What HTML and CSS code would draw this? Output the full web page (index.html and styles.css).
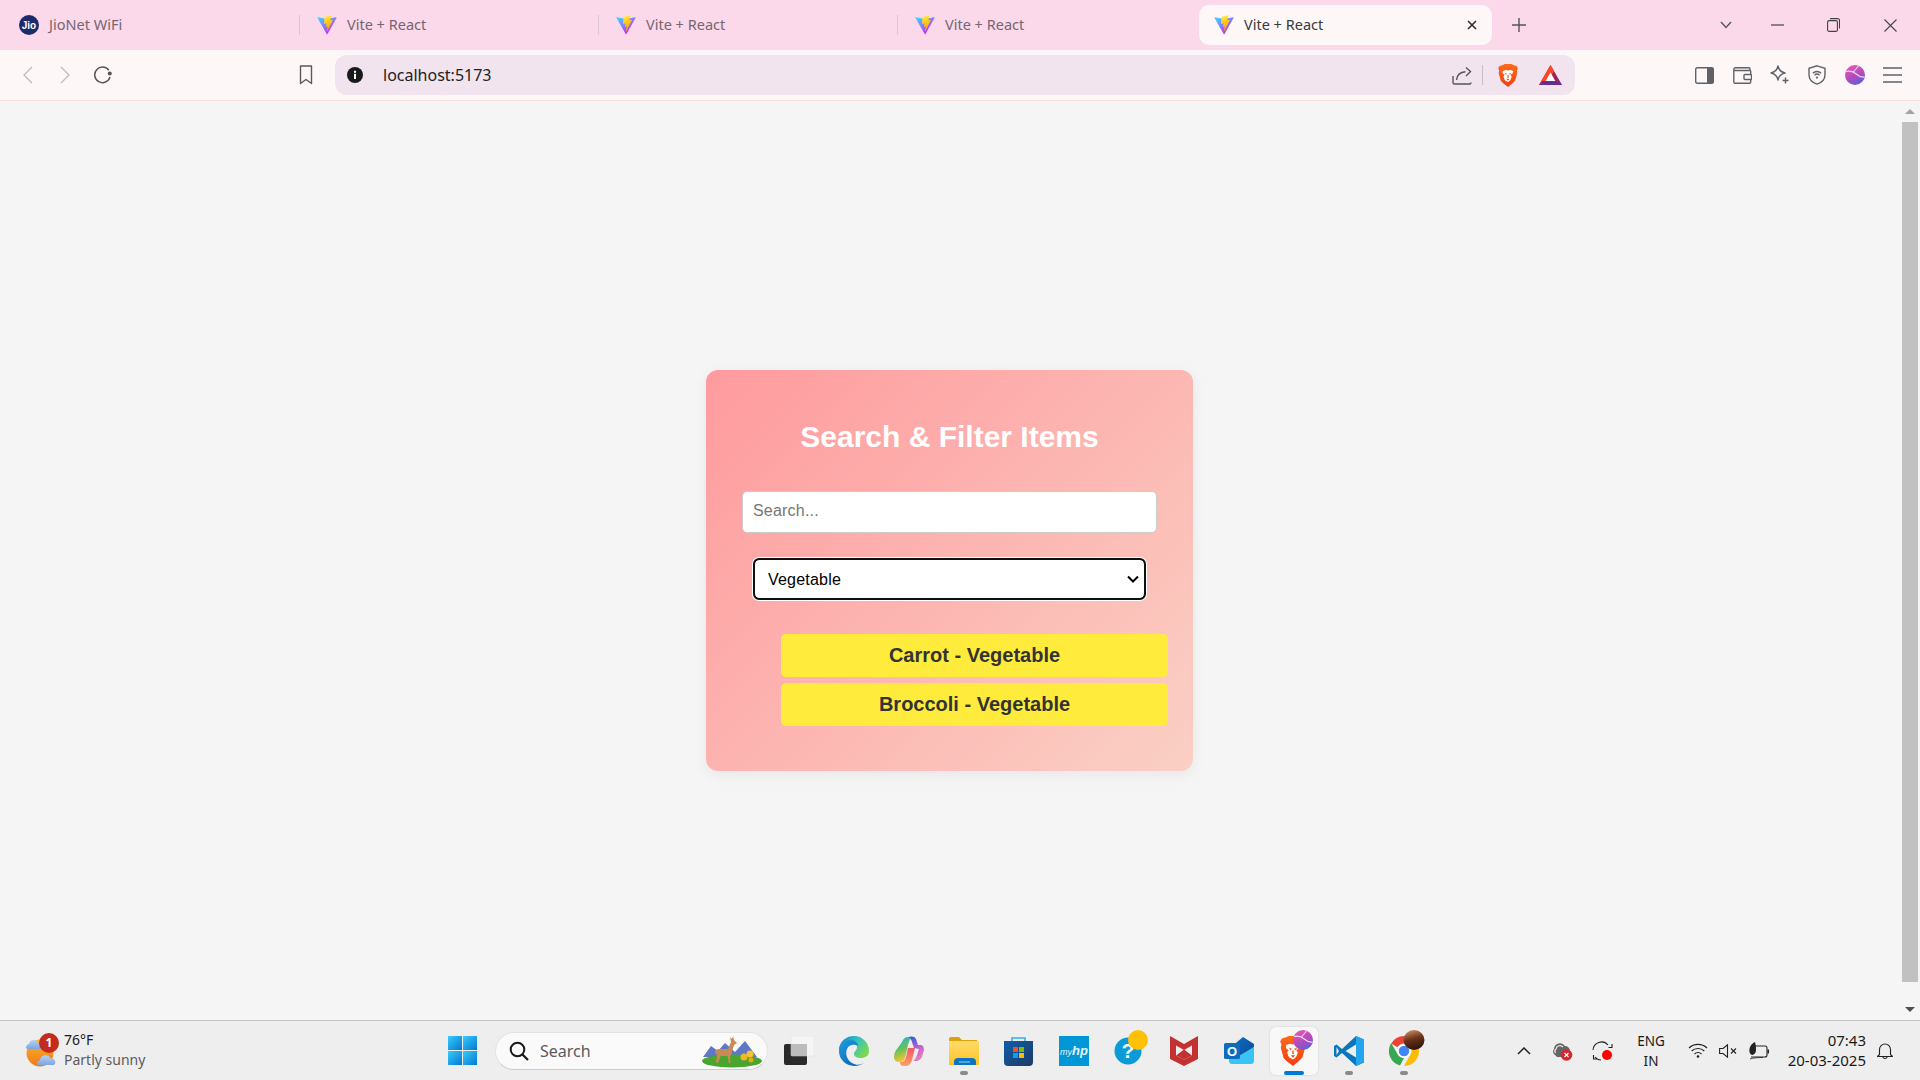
FILE: index.html
```html
<!DOCTYPE html>
<html lang="en">
<head>
<meta charset="utf-8">
<title>Vite + React</title>
<link rel="stylesheet" href="styles.css">
</head>
<body>
<svg class="defs" aria-hidden="true">
  <defs>
    <linearGradient id="vg1" x1="0" y1="0.1" x2="0.6" y2="0.9"><stop offset="0" stop-color="#41d1ff"/><stop offset="1" stop-color="#bd34fe"/></linearGradient>
    <linearGradient id="vg2" x1="0.4" y1="0" x2="0.6" y2="0.8"><stop offset="0" stop-color="#ffea83"/><stop offset="0.2" stop-color="#ffdd35"/><stop offset="1" stop-color="#ffa800"/></linearGradient>
    <linearGradient id="win" x1="0" y1="0" x2="1" y2="1"><stop offset="0" stop-color="#3ccbfa"/><stop offset="1" stop-color="#0078d4"/></linearGradient>
    <linearGradient id="edge1" x1="0" y1="0" x2="1" y2="0.6"><stop offset="0" stop-color="#0c7bc4"/><stop offset="0.5" stop-color="#2fc0c8"/><stop offset="1" stop-color="#7bd94e"/></linearGradient>
    <linearGradient id="edge2" x1="0" y1="0" x2="1" y2="1"><stop offset="0" stop-color="#1b9de2"/><stop offset="1" stop-color="#0c59a4"/></linearGradient>
    <linearGradient id="cop1" x1="0" y1="0" x2="0.3" y2="1"><stop offset="0" stop-color="#1cb0e8"/><stop offset="0.55" stop-color="#68c25a"/><stop offset="1" stop-color="#f5c631"/></linearGradient>
    <linearGradient id="cop2" x1="0.2" y1="0" x2="0.8" y2="1"><stop offset="0" stop-color="#2560d8"/><stop offset="0.45" stop-color="#b35bd6"/><stop offset="1" stop-color="#f08ab4"/></linearGradient>
    <linearGradient id="cop3" x1="0.5" y1="0" x2="0.5" y2="1"><stop offset="0" stop-color="#f5566a"/><stop offset="1" stop-color="#fba067"/></linearGradient>
    <linearGradient id="fold" x1="0" y1="0" x2="0" y2="1"><stop offset="0" stop-color="#ffdc6a"/><stop offset="1" stop-color="#fcc227"/></linearGradient>
    <linearGradient id="store" x1="0" y1="0" x2="1" y2="1"><stop offset="0" stop-color="#0f5ea8"/><stop offset="1" stop-color="#1e3a66"/></linearGradient>
    <linearGradient id="outl" x1="0" y1="0" x2="1" y2="1"><stop offset="0" stop-color="#0b6fc4"/><stop offset="1" stop-color="#0a4b98"/></linearGradient>
    <linearGradient id="ball" x1="0.2" y1="0" x2="0.7" y2="1"><stop offset="0" stop-color="#e35bb6"/><stop offset="0.55" stop-color="#b44bbd"/><stop offset="1" stop-color="#5a60d8"/></linearGradient>
    <linearGradient id="nut" x1="0.3" y1="0" x2="0.6" y2="1"><stop offset="0" stop-color="#c98a5f"/><stop offset="0.45" stop-color="#6a3318"/><stop offset="1" stop-color="#2a130a"/></linearGradient>
    <linearGradient id="sun" x1="0.5" y1="0" x2="0.5" y2="1"><stop offset="0" stop-color="#fbb626"/><stop offset="1" stop-color="#f0791a"/></linearGradient>
    <linearGradient id="cloud" x1="0.5" y1="0" x2="0.5" y2="1"><stop offset="0" stop-color="#b5d0f3"/><stop offset="1" stop-color="#7ea5df"/></linearGradient>
    <linearGradient id="brv" x1="0.5" y1="0" x2="0.5" y2="1"><stop offset="0" stop-color="#ff6a1a"/><stop offset="1" stop-color="#f23f14"/></linearGradient>

    <symbol id="vite" viewBox="0 0 410 404">
      <path fill="url(#vg1)" d="M399.641 59.5246L215.643 388.545C211.844 395.338 202.084 395.378 198.228 388.618L10.5817 59.5563C6.38087 52.1896 12.6802 43.2665 21.0281 44.7586L205.223 77.6824C206.398 77.8924 207.601 77.8904 208.776 77.6763L389.119 44.8058C397.439 43.2894 403.768 52.1434 399.641 59.5246Z"/>
      <path fill="url(#vg2)" d="M292.965 1.5744L156.801 28.2552C154.563 28.6937 152.906 30.5903 152.771 32.8664L144.395 174.33C144.198 177.662 147.258 180.248 150.51 179.498L188.42 170.749C191.967 169.931 195.172 173.055 194.443 176.622L183.18 231.775C182.422 235.487 185.907 238.661 189.532 237.56L212.947 230.446C216.577 229.344 220.065 232.527 219.297 236.242L201.398 322.875C200.278 328.294 207.486 331.249 210.492 326.603L212.5 323.5L323.454 102.072C325.312 98.3645 322.108 94.137 318.036 94.9228L279.014 102.454C275.347 103.161 272.227 99.746 273.262 96.1583L298.731 7.86689C299.767 4.27314 296.636 0.855181 292.965 1.5744Z"/>
    </symbol>

    <symbol id="lion" viewBox="0 0 24 28">
      <path fill="url(#brv)" d="M5 1.5 8 0h8l3 1.5 3 .5 2 3-1.2 3.2.6 2.3-2.6 9.5-3 3L12 28l-5.8-4.5-3-3L.6 11l.6-2.8L0 5l2-3z"/>
      <path fill="#fff" d="M5.5 8.5 9 7.2l3 .8 3-.8 3.5 1.3-1 3-2.5 1.7 1.5 2-1 3-1 1.8L12 22l-3.5-2-1-1.8-1-3 1.5-2-2.5-1.7z"/>
      <path fill="url(#brv)" d="M8 10.800 11 11.800 9.500 13.500zM16 10.800 13 11.800 14.500 13.500zM10 18h4l-2 2.300zM11.300 13.500h1.400v3.500h-1.400z"/>
    </symbol>

    <symbol id="ball-ic" viewBox="0 0 20 20">
      <circle cx="10" cy="10" r="10" fill="url(#ball)"/>
      <path d="M1 6.500c4-1 8 .5 11 3s5 3 7.500 2.500M13.500 1 8 7.500" fill="none" stroke="#f6d7ea" stroke-width="1.100"/>
    </symbol>
  </defs>
</svg>

<div class="screen">
  <header class="tabbar">
    <div class="tab">
      <svg class="fav" viewBox="0 0 20 20"><circle cx="10" cy="10" r="10" fill="#1f2a6b"/><text x="10" y="13.500" class="jio">Jio</text></svg>
      <span>JioNet WiFi</span>
    </div>
    <i class="tab-sep"></i>
    <div class="tab"><svg class="fav"><use href="#vite"/></svg><span>Vite + React</span></div>
    <i class="tab-sep"></i>
    <div class="tab"><svg class="fav"><use href="#vite"/></svg><span>Vite + React</span></div>
    <i class="tab-sep"></i>
    <div class="tab"><svg class="fav"><use href="#vite"/></svg><span>Vite + React</span></div>
    <div class="tab tab-active">
      <svg class="fav"><use href="#vite"/></svg><span>Vite + React</span>
      <svg class="tab-close" viewBox="0 0 10 10"><path d="M1 1l8 8M9 1 1 9" stroke="#333" stroke-width="1.700" fill="none"/></svg>
    </div>
    <svg class="new-tab" viewBox="0 0 14 14"><path d="M7 0v14M0 7h14" stroke="#555" stroke-width="1.400"/></svg>
    <svg class="tab-list" viewBox="0 0 12 8"><path d="M1 1l5 5.500L11 1" stroke="#5a5a5a" stroke-width="1.500" fill="none"/></svg>
    <div class="win-btn"><svg width="13" height="2" viewBox="0 0 13 2"><path d="M0 1h13" stroke="#444" stroke-width="1.200"/></svg></div>
    <div class="win-btn"><svg width="13" height="14" viewBox="0 0 13 14"><rect x=".6" y="2.600" width="9.800" height="10.800" rx="1.500" fill="none" stroke="#444" stroke-width="1.100"/><path d="M3 .6h7.500a2 2 0 0 1 2 2v8" fill="none" stroke="#444" stroke-width="1.100"/></svg></div>
    <div class="win-btn win-close"><svg width="13" height="13" viewBox="0 0 13 13"><path d="M.5.5l12 12M12.500.5l-12 12" stroke="#444" stroke-width="1.100"/></svg></div>
  </header>

  <nav class="toolbar">
    <div class="tool"><svg width="10" height="18" viewBox="0 0 10 18"><path d="M9 1 1 9l8 8" fill="none" stroke="#c2bdbf" stroke-width="1.400"/></svg></div>
    <div class="tool"><svg width="10" height="18" viewBox="0 0 10 18"><path d="M1 1l8 8-8 8" fill="none" stroke="#c2bdbf" stroke-width="1.400"/></svg></div>
    <div class="tool"><svg width="20" height="18" viewBox="0 0 20 18"><path d="M15.800 4.200A7.800 7.800 0 1 0 17 11" fill="none" stroke="#555" stroke-width="1.500"/><circle cx="16.800" cy="7.500" r="2" fill="#555"/></svg></div>
    <div class="tool tool-mark"><svg width="14" height="20" viewBox="0 0 14 20"><path d="M1.500 1h11v17.500L7 14.500l-5.500 4z" fill="none" stroke="#5a5a5a" stroke-width="1.400" stroke-linejoin="round"/></svg></div>
    <div class="address">
      <svg class="info" viewBox="0 0 16 16"><circle cx="8" cy="8" r="8" fill="#1a1a1a"/><rect x="7" y="6.800" width="2" height="5.200" fill="#fff"/><rect x="7" y="3.800" width="2" height="2" fill="#fff"/></svg>
      <span class="url">localhost:5173</span>
      <svg class="share" viewBox="0 0 20 19"><path d="M1 10v6.500a1.500 1.500 0 0 0 1.500 1.500h15a1.500 1.500 0 0 0 1.500-1.500M4.500 14c.5-5 4-8 9-8.300M14 1.500l4.500 4-4.500 4.500" fill="none" stroke="#555" stroke-width="1.400"/></svg>
      <i class="addr-sep"></i>
      <svg class="brave-addr"><use href="#lion"/></svg>
      <svg class="bat" viewBox="0 0 23 20"><path d="M11.500 0 23 20H0z" fill="#9e1f63"/><path d="M0 20 11.500 0 15 6 7 20z" fill="#ff4724"/><path d="M0 20l3.500-4h16l3.500 4z" fill="#662d91"/><path d="M11.500 7.500 16.300 16H6.700z" fill="#fff"/></svg>
    </div>
    <div class="tool tool-first"><svg width="19" height="17" viewBox="0 0 19 17"><rect x=".7" y=".7" width="17.600" height="15.600" rx="1.500" fill="none" stroke="#5f6368" stroke-width="1.400"/><rect x="12" y="1" width="6.500" height="15" fill="#5f6368"/></svg></div>
    <div class="tool"><svg width="19" height="17" viewBox="0 0 19 17"><path d="M17 3.500V2a1.200 1.200 0 0 0-1.200-1.200H2.500A1.700 1.700 0 0 0 .8 2.500v12.500a1.200 1.200 0 0 0 1.200 1.200h14.500a1.200 1.200 0 0 0 1.200-1.200V4.500a1 1 0 0 0-1-1H1.500" fill="none" stroke="#5f6368" stroke-width="1.400"/><rect x="11" y="7.500" width="7.500" height="5" rx="1" fill="#fef7f8" stroke="#5f6368" stroke-width="1.400"/></svg></div>
    <div class="tool"><svg width="20" height="20" viewBox="0 0 20 20"><path d="M8 1c.8 4 2.500 6 7 7-4.500 1-6.200 3-7 7-.8-4-2.500-6-7-7 4.500-1 6.200-3 7-7z" fill="none" stroke="#5f6368" stroke-width="1.400" stroke-linejoin="round"/><path d="M15.500 12.500v6M12.500 15.500h6" stroke="#5f6368" stroke-width="1.500"/></svg></div>
    <div class="tool"><svg width="18" height="20" viewBox="0 0 18 20"><path d="M9 .8l8 2.500v6.500c0 4.500-3.500 8-8 9.400-4.500-1.400-8-4.900-8-9.400V3.300z" fill="none" stroke="#5f6368" stroke-width="1.400"/><path d="M4.800 8.200a6 6 0 0 1 8.400 0M6.500 10.200a3.600 3.600 0 0 1 5 0" fill="none" stroke="#5f6368" stroke-width="1.300"/><circle cx="9" cy="12.600" r="1.100" fill="#5f6368"/></svg></div>
    <div class="tool"><svg width="20" height="20"><use href="#ball-ic"/></svg></div>
    <div class="tool"><svg width="19" height="16" viewBox="0 0 19 16"><path d="M0 1h19M0 8h19M0 15h19" stroke="#5f6368" stroke-width="1.500"/></svg></div>
  </nav>

  <div class="viewport">
    <main class="page">
      <section class="card">
        <h1 class="title">Search &amp; Filter Items</h1>
        <input class="search" type="text" placeholder="Search...">
        <select class="filter">
          <option>All</option>
          <option>Fruit</option>
          <option selected>Vegetable</option>
        </select>
        <ul class="results">
          <li class="result">Carrot - Vegetable</li>
          <li class="result">Broccoli - Vegetable</li>
        </ul>
      </section>
    </main>
    <aside class="scrollbar">
      <i class="arrow-up"></i>
      <div class="thumb"></div>
      <i class="arrow-down"></i>
    </aside>
  </div>

  <footer class="taskbar">
    <div class="weather">
      <div class="weather-icon">
        <svg width="34" height="34" viewBox="0 0 34 34">
          <circle cx="15" cy="19" r="13.500" fill="url(#sun)"/>
          <path d="M1 14a4 4 0 0 1 3-4 5 5 0 0 1 9.500-1A3.500 3.500 0 0 1 16 15H2.500z" fill="url(#cloud)"/>
          <path d="M12 31a4 4 0 0 1 3-5 5.500 5.500 0 0 1 10.500-1.500A3.800 3.800 0 0 1 29 31z" fill="url(#cloud)"/>
        </svg>
        <span class="badge">1</span>
      </div>
      <div class="weather-text">
        <span class="temp">76°F</span>
        <span class="cond">Partly sunny</span>
      </div>
    </div>
    <svg class="start" viewBox="0 0 29 29"><rect width="14" height="14" fill="url(#win)"/><rect x="15" width="14" height="14" fill="url(#win)"/><rect y="15" width="14" height="14" fill="url(#win)"/><rect x="15" y="15" width="14" height="14" fill="url(#win)"/></svg>
    <div class="task-search">
      <svg class="mag" viewBox="0 0 20 20"><circle cx="8.500" cy="8.500" r="6.800" fill="none" stroke="#1a1a1a" stroke-width="2"/><path d="M13.500 13.500 19 19" stroke="#1a1a1a" stroke-width="2.200"/></svg>
      <span>Search</span>
      <svg class="deer" viewBox="0 0 64 36">
        <path d="M2 24 10 13l7 5 7-8 10 9 10-11 12 16z" fill="#5d78c4"/>
        <ellipse cx="31" cy="28" rx="30" ry="6.500" fill="#4aa52e"/>
        <path d="M14 19c0-2 2-3 4-3h9l3-7-1-5 2 2 1-3 1 4 3 3-3 2-2 7c-.5 2-1 3-2 4l.5 7h-1.500l-1.500-7h-7l-2.500 7H15l1-8c-1-1-2-1.500-2-3z" fill="#c98a55"/>
        <circle cx="43" cy="24" r="3.500" fill="#f2b61f"/><circle cx="49" cy="21" r="3.500" fill="#f5c330"/><circle cx="50" cy="27" r="2.500" fill="#eda71a"/>
      </svg>
    </div>
    <div class="apps">
      <div class="app"><svg width="30" height="29" viewBox="0 0 30 29"><rect y="8" width="23" height="21" rx="2" fill="#2a2a2a"/><rect x="7" width="23" height="20" rx="1.500" fill="#f5f5f5" stroke="#ddd" stroke-width=".5"/><rect x="7" y="8" width="16" height="12" fill="#bcbcbc"/></svg></div>
      <div class="app"><svg width="30" height="30" viewBox="0 0 30 30"><path d="M15 0a15 15 0 0 1 15 15c0 5-4 7-8 7-5 0-7-2-7-4 0-3 3-3 3-7S14 5 10 7 3 13 3 18c-1-2-3-4-3-6A15 15 0 0 1 15 0z" fill="url(#edge1)"/><path d="M0 15C0 8 6 4 11 4c5 0 8 3 8 6-3-2-9-2-11 3s0 11 5 14 10 2 14-2c-3 3-7 5-12 5A15 15 0 0 1 0 15z" fill="url(#edge2)"/></svg></div>
      <div class="app"><svg width="30" height="30" viewBox="0 0 30 30"><path d="M8 6c1-3 3-5 6-5h5c-3 1-4 4-5 8l-3 13c-1 3-3 4-6 4-3 0-5-2-5-5 0-2 .5-4 1.500-6z" fill="url(#cop1)"/><path d="M14 1c3-1 7-1 8 2l2 6h2c3 0 4 2 4 5l-2 7c-1 2-3 4-6 4h-3c2-1 3-3 4-6l2-6-5-1-2-6c-1-3-2-5-4-5z" fill="url(#cop2)"/><path d="M14 12h7l-3 12c-1 3-3 6-6 6H9c-2 0-3-2-3-4h1c3 0 4-2 5-5z" fill="url(#cop3)"/></svg></div>
      <div class="app"><svg width="30" height="28" viewBox="0 0 30 28"><path d="M0 2a2 2 0 0 1 2-2h8l3 3h15v5H0z" fill="#dfa00a"/><path d="M0 4h30v24H0z" fill="url(#fold)"/><path d="M5 28v-3a4 4 0 0 1 4-4h14a4 4 0 0 1 4 4v3z" fill="#0d74c4"/><path d="M10 25h11" stroke="#7cc3f0" stroke-width="1.200"/></svg><i class="pip"></i></div>
      <div class="app"><svg width="29" height="30" viewBox="0 0 29 30"><path d="M8 6V2h13v4" fill="none" stroke="#2bb3f0" stroke-width="1.600"/><path d="M0 5h29v21a4 4 0 0 1-4 4H4a4 4 0 0 1-4-4z" fill="url(#store)"/><rect x="9" y="11" width="5" height="5" fill="#f25022"/><rect x="15" y="11" width="5" height="5" fill="#7fba00"/><rect x="9" y="17" width="5" height="5" fill="#00a4ef"/><rect x="15" y="17" width="5" height="5" fill="#ffb900"/></svg></div>
      <div class="app"><svg width="30" height="30" viewBox="0 0 30 30"><rect width="30" height="30" fill="#0097d6"/><text x="15" y="19" class="myhp">my<tspan class="hp">hp</tspan></text></svg></div>
      <div class="app app-help"><svg width="36" height="36" viewBox="0 0 36 36"><circle cx="14" cy="21" r="13.500" fill="#0d9bd8"/><text x="14" y="28" class="qm">?</text><circle cx="24" cy="10" r="10" fill="#ffc107"/></svg></div>
      <div class="app"><svg width="28" height="30" viewBox="0 0 28 30"><path d="M0 0l14 8 14-8v23l-14 7-14-7z" fill="#c43131"/><path d="M6 9.500l8 4.500 8-4.500v10l-8 4-8-4z" fill="#eeeeee"/><path d="M6 19.500l8-6 8 6-8 4z" fill="#c43131"/></svg></div>
      <div class="app"><svg width="30" height="27" viewBox="0 0 30 27"><path d="M6 11 19 0l11 7v3L13 22 6 16z" fill="url(#outl)"/><path d="M5 13l8 7 17-10v14a3 3 0 0 1-3 3H8a3 3 0 0 1-3-3z" fill="#38c5f5"/><rect y="6" width="16" height="16" rx="1.500" fill="#0f6cbd"/><text x="8" y="18.500" class="outl-o">O</text></svg></div>
      <div class="app app-active">
        <svg class="brave-task" width="36" height="36" viewBox="0 0 36 36"><svg x="3" y="6" width="26" height="30"><use href="#lion"/></svg><svg x="16" y="0" width="20" height="20"><use href="#ball-ic"/></svg></svg>
        <i class="pip pip-active"></i>
      </div>
      <div class="app"><svg width="30" height="30" viewBox="0 0 30 30"><path d="M22 0 8 13 2.500 8.500 0 10v10l2.500 1.500L8 17l14 13 8-3.500V3.500z" fill="#0a77bd"/><path d="M22 0l8 3.500v23L22 30z" fill="#25a5ee"/><path d="M22 8.500 11.500 15 22 21.500z" fill="#eeeeee"/><path d="M2.500 11 5 15l-2.500 4z" fill="#eeeeee"/></svg><i class="pip"></i></div>
      <div class="app"><svg width="36" height="36" viewBox="0 0 36 36">
        <path d="M15 6a15 15 0 0 1 13 7.500H15a7.500 7.500 0 0 0-6.500 3.700L2.200 13.500A15 15 0 0 1 15 6z" fill="#ea4335"/>
        <path d="M2.200 13.500 9 25.500a7.500 7.500 0 0 0 6 3L11 36A15 15 0 0 1 2.200 13.500z" fill="#34a853" transform="translate(0 -.5)"/>
        <path d="M28 13.500A15 15 0 0 1 15 36l6.500-11.500a7.500 7.500 0 0 0 0-7.500 7.500 7.500 0 0 0-2-3.500z" fill="#fbbc05"/>
        <circle cx="15" cy="21" r="6" fill="#4285f4" stroke="#fff" stroke-width="1.500"/>
        <ellipse cx="25" cy="10" rx="10.500" ry="10" fill="url(#nut)"/>
      </svg><i class="pip"></i></div>
    </div>
    <div class="tray">
      <svg class="tray-chev" viewBox="0 0 14 8"><path d="M1 7l6-6 6 6" fill="none" stroke="#222" stroke-width="1.500"/></svg>
      <svg class="tray-cloud" viewBox="0 0 22 20"><path d="M3 14a4 4 0 0 1-1-6 6 6 0 0 1 11-3 5 5 0 0 1 5 5l-7 6H5z" fill="#666"/><path d="M3.500 12a3 3 0 0 1 .5-4 4 4 0 0 1 7-2" fill="none" stroke="#eee" stroke-width="1.200"/><circle cx="14.500" cy="14" r="5.800" fill="#d9252f"/><path d="M12.500 12l4 4m0-4-4 4" stroke="#fff" stroke-width="1.200"/></svg>
      <svg class="tray-sync" viewBox="0 0 22 20"><path d="M1 9a8.500 8.500 0 0 1 15-5M20 3v3.500h-3.500M3 16a8 8 0 0 0 6 3M1.500 14v4H5" fill="none" stroke="#222" stroke-width="1.100"/><circle cx="15" cy="14" r="5" fill="#f00"/></svg>
      <div class="lang"><span>ENG</span><span>IN</span></div>
      <svg class="tray-wifi" viewBox="0 0 20 15"><path d="M1 5a13 13 0 0 1 18 0M3.700 8a9 9 0 0 1 12.600 0M6.500 11a5 5 0 0 1 7 0" fill="none" stroke="#222" stroke-width="1.100"/><circle cx="10" cy="13.500" r="1.300" fill="#222"/></svg>
      <svg class="tray-vol" viewBox="0 0 20 14"><path d="M.6 4.500h3.500L8.500.8v12.400L4.100 9.500H.6z" fill="none" stroke="#222" stroke-width="1.100"/><path d="M12 4.500l5 5m0-5-5 5" stroke="#222" stroke-width="1.100"/></svg>
      <svg class="tray-batt" viewBox="0 0 21 18"><path d="M5 4h11a2 2 0 0 1 2 2v7a2 2 0 0 1-2 2H2" fill="none" stroke="#222" stroke-width="1.100"/><path d="M18.500 7.500H20v4h-1.500z" fill="#222"/><path d="M6 0C2 2 0 5 .5 10c.2 2 2 3 3 3 3-1 3.500-3 3.500-6S6.800 3 6 0z" fill="#222"/><path d="M1 17c3-1 7-1.500 13-1.500" fill="none" stroke="#222" stroke-width=".8"/></svg>
      <div class="clock"><span>07:43</span><span>20-03-2025</span></div>
      <svg class="tray-bell" viewBox="0 0 16 18"><path d="M2.500 12.500V7.500a5.500 5.500 0 0 1 11 0v5L15.500 14.500H.5zM5.800 14.800a2.300 2.300 0 0 0 4.400 0" fill="none" stroke="#222" stroke-width="1.100" stroke-linejoin="round"/></svg>
    </div>
  </footer>
</div>
</body>
</html>
```

FILE: styles.css
```css
* { box-sizing: border-box; }
html, body { margin: 0; height: 100%; overflow: hidden; }
body { font-family: "Noto Sans", "Open Sans", sans-serif; background: #f5f5f5; }
.defs { position: absolute; width: 0; height: 0; }
i { display: block; }
.screen { display: flex; flex-direction: column; height: 1080px; }

/* tab strip */
.tabbar { display: flex; align-items: center; height: 50px; flex: none; background: #fbd9ea; padding-left: 1px; }
.tab { display: flex; align-items: center; gap: 10px; width: 298px; height: 40px; padding-left: 18px; font-size: 14.5px; color: #75666f; flex: none; }
.tab span { margin-top: -2px; }
.tab + .tab-sep + .tab { padding-left: 17px; }
.tab-sep { width: 1px; height: 20px; background: #dcc6d2; flex: none; }
.tab-active { width: 293px; margin-left: 3px; padding-left: 15px !important; background: #fef7f8; border-radius: 10px; color: #3a3a3a; }
.fav { width: 20px; height: 20px; flex: none; }
.jio { font: bold 10px "Liberation Sans", sans-serif; fill: #fff; text-anchor: middle; }
.tab-close { width: 10px; height: 10px; margin-left: auto; margin-right: 15px; }
.new-tab { width: 14px; height: 14px; margin-left: 20px; flex: none; }
.tab-list { width: 12px; height: 8px; margin-left: 194px; margin-right: 17px; flex: none; }
.win-btn { width: 56px; display: flex; justify-content: center; align-items: center; height: 40px; flex: none; }
.win-close { width: 58px; }

/* toolbar */
.toolbar { display: flex; align-items: center; height: 51px; flex: none; background: #fef7f8; border-bottom: 1px solid #f5dfe3; padding-left: 9px; }
.tool { width: 37.5px; height: 40px; display: flex; align-items: center; justify-content: center; flex: none; }
.tool-mark { margin-left: 165.75px; margin-right: 10.25px; }
.address { display: flex; align-items: center; width: 1240px; height: 40px; background: #f1e4ee; border-radius: 12px; padding-left: 12px; flex: none; }
.info { width: 16px; height: 16px; flex: none; }
.url { margin-left: 20px; font-size: 16px; color: #222; }
.share { width: 20px; height: 19px; margin-left: auto; }
.addr-sep { width: 1px; height: 20px; background: #c8bcc5; margin-left: 10px; }
.brave-addr { width: 20px; height: 23px; margin-left: 15px; }
.bat { width: 23px; height: 20px; margin-left: 21px; margin-right: 13px; }
.tool-first { margin-left: 111px; }

/* page */
.viewport { flex: 1; display: flex; min-height: 0; }
.page { flex: 1; display: flex; justify-content: center; align-items: flex-start; padding: 269px 1px 0 0; }
.card { width: 487px; height: 401px; padding: 36px; border-radius: 12px; background: linear-gradient(135deg, #ff9a9e, #fad0c4); box-shadow: 0 4px 15px rgba(0,0,0,.06); font-family: "Liberation Sans", Arial, sans-serif; }
.title { margin: 14px 0 37px; font-size: 30px; line-height: 34px; font-weight: bold; color: #fff; text-align: center; }
.search { display: block; width: 415px; height: 42px; padding: 8px 10px 10px; border: 1px solid #ccc; border-radius: 5px; font: 16px "Liberation Sans", Arial, sans-serif; letter-spacing: .2px; background: #fff; }
.search::placeholder { color: #757575; }
.filter { appearance: none; display: block; width: 391px; height: 40px; margin: 26px auto 0; padding: 0 30px 0 13px; border: 1px solid #000; border-radius: 5px; font: 16px "Liberation Sans", Arial, sans-serif; letter-spacing: .2px; color: #000; background: #fff url("data:image/svg+xml,%3Csvg xmlns='http://www.w3.org/2000/svg' width='12' height='8' viewBox='0 0 12 8'%3E%3Cpath d='M1 1.500l5 5 5-5' fill='none' stroke='%23000' stroke-width='2'/%3E%3C/svg%3E") no-repeat right 5px center; outline: 2px solid #101010; outline-offset: -1px; box-shadow: 0 0 0 2px #fff; }
.results { list-style: none; margin: 35px 0 0; padding: 0 0 0 39px; width: 426px; }
.result { height: 43px; margin-bottom: 6px; line-height: 43px; border-radius: 5px; background: #ffeb3b; color: #333; font-size: 20px; font-weight: bold; text-align: center; }

/* scrollbar */
.scrollbar { width: 20px; flex: none; background: #f5f5f5; display: flex; flex-direction: column; align-items: center; padding: 8px 2px 8px; }
.thumb { flex: 1; width: 100%; background: #c1c1c1; margin: 8px 0 25px; }
.arrow-up, .arrow-down { width: 0; height: 0; border-left: 5px solid transparent; border-right: 5px solid transparent; }
.arrow-up { border-bottom: 5px solid #a3a3a3; }
.arrow-down { border-top: 5px solid #505050; }

/* taskbar */
.taskbar { display: flex; align-items: center; height: 60px; flex: none; background: #eeeeee; border-top: 1px solid #c6c6c6; }
.weather { display: flex; width: 448px; padding-left: 25px; gap: 6px; align-items: center; flex: none; }
.weather-icon { position: relative; width: 33px; height: 34px; }
.badge { position: absolute; left: 14px; top: -1px; width: 20px; height: 20px; border-radius: 50%; background: #c42b1c; color: #fff; font-size: 12px; font-weight: bold; line-height: 20px; text-align: center; }
.weather-text { display: flex; flex-direction: column; margin-top: -2px; font-size: 14px; line-height: 20px; color: #1a1a1a; }
.cond { color: #5c5c5c; }
.start { width: 29px; height: 29px; flex: none; margin-right: 18px; }
.task-search { display: flex; align-items: center; width: 273px; height: 38px; border-radius: 19px; background: #fafafa; border: 1px solid #e2e2e2; border-bottom-color: #ccc; padding-left: 13px; font-size: 16px; color: #5a5a5a; flex: none; }
.mag { width: 20px; height: 20px; margin-right: 11px; flex: none; }
.deer { width: 64px; height: 36px; margin-left: auto; margin-right: 2px; }
.apps { display: flex; margin-left: 3px; flex: none; }
.app { position: relative; width: 55px; height: 48px; display: flex; align-items: center; justify-content: center; flex: none; }
.app svg { flex: none; }
.app-help svg { margin-left: 6px; margin-top: -6px; }
.app-active { background: #f8f8f8; border-radius: 6px; box-shadow: 0 0 2px rgba(0,0,0,.15); width: 48px; margin: 0 3.5px; }
.brave-task { margin-left: 2px; margin-top: -6px; }
.app:last-child svg { margin-left: 6px; margin-top: -6px; }
.pip { position: absolute; left: 50%; bottom: 0; width: 8px; height: 4px; margin-left: -4px; border-radius: 2px; background: #8a8a8a; }
.pip-active { width: 20px; margin-left: -10px; background: #0078d4; }
.myhp { font: italic 9px "Liberation Sans", sans-serif; fill: #e6f5fc; text-anchor: middle; }
.hp { font-weight: bold; font-size: 13px; }
.qm { font: bold 21px "Liberation Sans", sans-serif; fill: #fff; text-anchor: middle; }
.outl-o { font: bold 13px "Liberation Sans", sans-serif; fill: #fff; text-anchor: middle; }
.tray { display: flex; align-items: center; margin-left: auto; color: #1a1a1a; font-size: 13.5px; flex: none; }
.tray-chev { width: 14px; height: 8px; margin-right: 21px; }
.tray-cloud { width: 22px; height: 20px; margin-right: 18px; }
.tray-sync { width: 22px; height: 20px; }
.lang { display: flex; flex-direction: column; align-items: center; width: 46px; margin-left: 14px; margin-right: 14px; line-height: 20px; font-size: 13.5px; }
.tray-wifi { width: 20px; height: 15px; margin-right: 11px; }
.tray-vol { width: 20px; height: 14px; margin-right: 10px; }
.tray-batt { width: 21px; height: 18px; }
.clock { display: flex; flex-direction: column; align-items: flex-end; width: 96px; margin-top: -2px; line-height: 20px; font-size: 15px; margin-right: 11px; }
.tray-bell { width: 16px; height: 18px; margin-right: 27px; }
```
